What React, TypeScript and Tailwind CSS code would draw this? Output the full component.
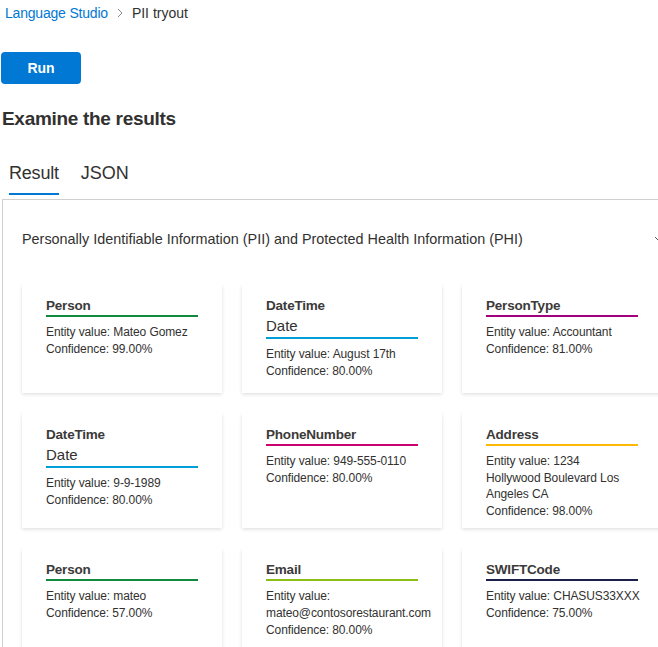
import React from 'react';

type Entity = {
  category: string;
  subcategory?: string;
  value: React.ReactNode;
  confidence: string;
  line: string;
  nowrap?: boolean;
};

const entities: Entity[] = [
  { category: 'Person', value: 'Mateo Gomez', confidence: '99.00%', line: 'border-[#10893e]' },
  { category: 'DateTime', subcategory: 'Date', value: 'August 17th', confidence: '80.00%', line: 'border-[#009fd9]' },
  { category: 'PersonType', value: 'Accountant', confidence: '81.00%', line: 'border-[#a1007e]' },
  { category: 'DateTime', subcategory: 'Date', value: '9-9-1989', confidence: '80.00%', line: 'border-[#009fd9]' },
  { category: 'PhoneNumber', value: '949-555-0110', confidence: '80.00%', line: 'border-[#cc0070]' },
  {
    category: 'Address',
    value: (
      <>
        1234
        <br />
        Hollywood Boulevard Los Angeles CA
      </>
    ),
    confidence: '98.00%',
    line: 'border-[#ffb900]',
  },
  { category: 'Person', value: 'mateo', confidence: '57.00%', line: 'border-[#10893e]' },
  { category: 'Email', value: 'mateo@contosorestaurant.com', confidence: '80.00%', line: 'border-[#8cbd18]' },
  { category: 'SWIFTCode', value: 'CHASUS33XXX', confidence: '75.00%', line: 'border-[#1c1f4a]', nowrap: true },
];

const EntityCard: React.FC<{ entity: Entity }> = ({ entity }) => (
  <div className="bg-white min-h-[109px] pt-[13px] pb-[9px] px-6 shadow-[0_1.6px_3.6px_rgba(0,0,0,0.13),0_0.3px_0.9px_rgba(0,0,0,0.11)]">
    <div className={`border-b-2 ${entity.line}`}>
      <div className="text-[13.5px] leading-[18px] font-semibold tracking-[-0.2px] text-[#3b3a39]">{entity.category}</div>
      {entity.subcategory && (
        <div className="text-[15px] leading-[22px] text-[#323130]">{entity.subcategory}</div>
      )}
    </div>
    <div className="mt-[7px] text-xs leading-[16.6px] text-[#323130] tracking-[-0.1px]">
      <div className={entity.nowrap ? 'whitespace-nowrap' : ''}>Entity value: {entity.value}</div>
      <div>Confidence: {entity.confidence}</div>
    </div>
  </div>
);

const App: React.FC = () => {
  return (
    <div className="w-[658px] h-[647px] overflow-hidden bg-white text-[#323130] font-['Segoe_UI','Liberation_Sans',Arial,sans-serif]">
      <nav className="flex items-center h-[26px] pl-[5px] text-sm">
        <span className="text-[#0078d4] tracking-[-0.2px]">Language Studio</span>
        <svg className="mx-[8px] w-[8px] h-[10px]" viewBox="0 0 8 10" fill="none">
          <path d="M2 1l4 4-4 4" stroke="#8a8886" strokeWidth="1" />
        </svg>
        <span>PII tryout</span>
      </nav>

      <button className="mt-[26px] ml-[1px] w-20 h-8 rounded-sm bg-[#0078d4] text-white text-sm font-semibold">
        Run
      </button>

      <h2 className="mt-[21px] ml-[2px] text-[19px] leading-7 font-semibold tracking-[-0.3px] text-[#323130]">
        Examine the results
      </h2>

      <div className="mt-[28px] flex gap-[22px] pl-[9px] text-lg leading-6">
        <div className="pb-2 border-b-2 border-[#0078d4] text-[#323130] tracking-[-0.2px]">Result</div>
        <div className="pb-2 text-[#323130]">JSON</div>
      </div>

      <div className="mt-[4px] ml-[2px] w-[720px] border border-[#d2d0ce] pl-[19px] pt-[29px] pb-10">
        <div className="flex items-center w-[644px]">
          <span className="text-[14.4px] leading-5">
            Personally Identifiable Information (PII) and Protected Health Information (PHI)
          </span>
          <svg className="ml-auto w-3 h-3" viewBox="0 0 12 12" fill="none">
            <path d="M1 4l5 5 5-5" stroke="#605e5c" strokeWidth="1" />
          </svg>
        </div>

        <div className="mt-[35px] grid grid-cols-[200px_200px_200px] gap-5">
          {entities.map((e, i) => (
            <EntityCard key={i} entity={e} />
          ))}
        </div>
      </div>
    </div>
  );
};

export default App;
